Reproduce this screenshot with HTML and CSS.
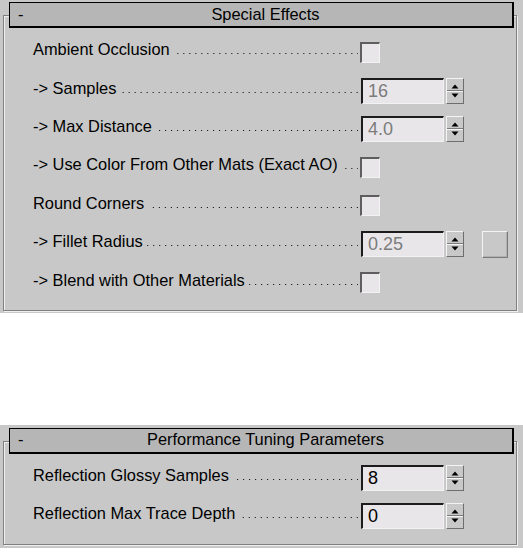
FILE: index.html
```html
<!doctype html>
<html>
  <head>
    <title>Rollouts</title>
    <link rel="stylesheet" href="styles.css">
  </head>
  <body>
    <section class="rollout">
      <div class="frame">
        <div class="title"><span class="toggle">-</span><span class="title-text">Special Effects</span></div>
        <div class="rows">
          <div class="row">
            <div class="label"><span>Ambient Occlusion</span><span class="leader"></span></div>
            <span class="check"></span>
          </div>
          <div class="row">
            <div class="label"><span>-&gt; Samples</span><span class="leader"></span></div>
            <span class="field muted">16</span>
            <span class="spinner"><svg width="16" height="24" viewBox="0 0 16 24"><polygon points="4.5,9.5 11.5,9.5 8,5.5" fill="#000"/><line x1="0" y1="11.5" x2="16" y2="11.5" stroke="#7a7a7a"/><line x1="0" y1="12.5" x2="16" y2="12.5" stroke="#f4f4f4"/><polygon points="4.5,14.5 11.5,14.5 8,18.5" fill="#000"/></svg></span>
          </div>
          <div class="row">
            <div class="label"><span>-&gt; Max Distance</span><span class="leader"></span></div>
            <span class="field muted">4.0</span>
            <span class="spinner"><svg width="16" height="24" viewBox="0 0 16 24"><polygon points="4.5,9.5 11.5,9.5 8,5.5" fill="#000"/><line x1="0" y1="11.5" x2="16" y2="11.5" stroke="#7a7a7a"/><line x1="0" y1="12.5" x2="16" y2="12.5" stroke="#f4f4f4"/><polygon points="4.5,14.5 11.5,14.5 8,18.5" fill="#000"/></svg></span>
          </div>
          <div class="row">
            <div class="label"><span>-&gt; Use Color From Other Mats (Exact AO)</span><span class="leader"></span></div>
            <span class="check"></span>
          </div>
          <div class="row">
            <div class="label"><span>Round Corners</span><span class="leader"></span></div>
            <span class="check"></span>
          </div>
          <div class="row">
            <div class="label"><span>-&gt; Fillet Radius</span><span class="leader"></span></div>
            <span class="field muted">0.25</span>
            <span class="spinner"><svg width="16" height="24" viewBox="0 0 16 24"><polygon points="4.5,9.5 11.5,9.5 8,5.5" fill="#000"/><line x1="0" y1="11.5" x2="16" y2="11.5" stroke="#7a7a7a"/><line x1="0" y1="12.5" x2="16" y2="12.5" stroke="#f4f4f4"/><polygon points="4.5,14.5 11.5,14.5 8,18.5" fill="#000"/></svg></span>
            <span class="map-btn"></span>
          </div>
          <div class="row">
            <div class="label"><span>-&gt; Blend with Other Materials</span><span class="leader"></span></div>
            <span class="check"></span>
          </div>
        </div>
      </div>
    </section>

    <section class="rollout rollout-perf">
      <div class="frame">
        <div class="title"><span class="toggle">-</span><span class="title-text">Performance Tuning Parameters</span></div>
        <div class="rows">
          <div class="row">
            <div class="label"><span>Reflection Glossy Samples</span><span class="leader"></span></div>
            <span class="field">8</span>
            <span class="spinner"><svg width="16" height="24" viewBox="0 0 16 24"><polygon points="4.5,9.5 11.5,9.5 8,5.5" fill="#000"/><line x1="0" y1="11.5" x2="16" y2="11.5" stroke="#7a7a7a"/><line x1="0" y1="12.5" x2="16" y2="12.5" stroke="#f4f4f4"/><polygon points="4.5,14.5 11.5,14.5 8,18.5" fill="#000"/></svg></span>
          </div>
          <div class="row">
            <div class="label"><span>Reflection Max Trace Depth</span><span class="leader"></span></div>
            <span class="field">0</span>
            <span class="spinner"><svg width="16" height="24" viewBox="0 0 16 24"><polygon points="4.5,9.5 11.5,9.5 8,5.5" fill="#000"/><line x1="0" y1="11.5" x2="16" y2="11.5" stroke="#7a7a7a"/><line x1="0" y1="12.5" x2="16" y2="12.5" stroke="#f4f4f4"/><polygon points="4.5,14.5 11.5,14.5 8,18.5" fill="#000"/></svg></span>
          </div>
        </div>
      </div>
    </section>
  </body>
</html>
```

FILE: styles.css
```css
body {
    margin: 0;
    background: #fff;
    font-family: "Liberation Sans", Arial, sans-serif;
    font-size: 16.4px;
    color: #000;
}

.rollout {
    background: #c8c8c8;
    padding: 15px 0 2px 3px;
}

.rollout-perf {
    margin-top: 112px;
    padding-top: 16px;
    padding-bottom: 3px;
}

/* etched group box */
.frame {
    width: 512px;
    border: 1px solid #808080;
    box-shadow: 1px 1px 0 #efefef, inset 1px 1px 0 #efefef;
    padding-bottom: 8px;
}

.title {
    box-sizing: border-box;
    display: flex;
    align-items: center;
    width: 505px;
    height: 26px;
    margin: -14px 0 0 5px;
    padding: 0 7px 1px 8px;
    border: 1px solid #000;
    border-right-width: 2px;
    border-bottom-width: 2px;
    background: #b6b6b6;
}

.toggle {
    width: 8px;
}

.title-text {
    flex: 1;
    text-align: center;
}

.rows {
    margin-top: 5px;
    padding-left: 29px;
}

.row {
    display: flex;
    align-items: center;
    height: 38.4px;
}

.label {
    display: flex;
    align-items: baseline;
    width: 327px;
    padding-bottom: 5px;
    white-space: nowrap;
}

.leader {
    flex: 1;
    height: 2px;
    margin: 0 2px 0 4px;
    background-image: linear-gradient(to right, transparent 5px, #000 5px);
    background-size: 6px 1px;
    background-repeat: repeat-x;
    background-position: right top;
}

.check {
    box-sizing: border-box;
    width: 20px;
    height: 21px;
    background: #e9e6ea;
    border-top: 2px solid #5e5e5e;
    border-left: 2px solid #5e5e5e;
    border-right: 1px solid #f2f2f2;
    border-bottom: 1px solid #f2f2f2;
}

.field {
    box-sizing: border-box;
    width: 83px;
    height: 26px;
    margin-left: 1px;
    padding-left: 5px;
    background: #e9e6ea;
    border-top: 2px solid #1c1c1c;
    border-left: 2px solid #1c1c1c;
    border-right: 1px solid #f2f2f2;
    border-bottom: 1px solid #f2f2f2;
    font-size: 18px;
    line-height: 22px;
}

.muted {
    color: #7c7c7c;
}

.spinner {
    box-sizing: border-box;
    display: flex;
    width: 18px;
    height: 26px;
    margin-left: 2px;
    border: 1px solid;
    border-color: #f4f4f4 #6e6e6e #6e6e6e #f4f4f4;
}

.map-btn {
    box-sizing: border-box;
    width: 26px;
    height: 27px;
    margin-left: 18px;
    border: 1px solid;
    border-color: #f4f4f4 #7a7a7a #7a7a7a #f4f4f4;
    box-shadow: inset -1px -1px 0 #b0b0b0;
}
```
